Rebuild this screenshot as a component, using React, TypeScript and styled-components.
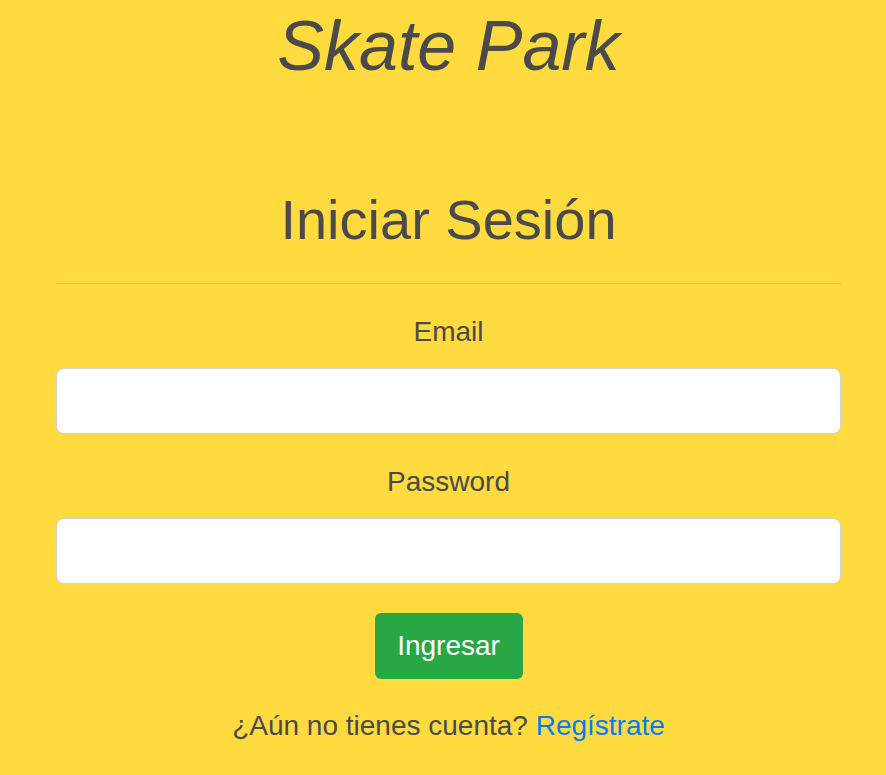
import React from "react";
import styled, { createGlobalStyle } from "styled-components";

const Global = createGlobalStyle`
  html, body { margin: 0; padding: 0; background: #ffdb3f; }
  body { font-family: "Liberation Sans", Arial, sans-serif; color: #4a4a4a; }
  * { box-sizing: border-box; }
`;

const Page = styled.div`
  min-height: 775px;
  background: #ffdb3f;
  padding: 0 45px 0 56px;
  display: flex;
  flex-direction: column;
  align-items: stretch;
`;

const Brand = styled.h1`
  margin: 0;
  font-size: 70px;
  font-style: italic;
  font-weight: 400;
  text-align: center;
  line-height: 1;
  padding-top: 11px;
  color: #4a4a4a;
`;

const Heading = styled.h2`
  margin: 111px 0 0;
  font-size: 56px;
  font-weight: 400;
  text-align: center;
  line-height: 1;
  color: #4a4a4a;
`;

const Rule = styled.hr`
  margin: 35px 0 0;
  border: 0;
  border-top: 1px solid rgba(0, 0, 0, 0.1);
`;

const Form = styled.form`
  display: flex;
  flex-direction: column;
  align-items: stretch;
`;

const Field = styled.div<{ $top: number }>`
  display: flex;
  flex-direction: column;
  align-items: center;
  margin-top: ${(p) => p.$top}px;
`;

const Label = styled.label`
  font-size: 28px;
  line-height: 1;
  color: #4a4a4a;
  margin-bottom: 22px;
`;

const Input = styled.input`
  width: 100%;
  height: 66px;
  border: 1px solid #ced4da;
  border-radius: 8px;
  background: #fff;
  font-size: 24px;
  padding: 0 16px;
  outline: none;
`;

const Button = styled.button`
  align-self: center;
  margin-top: 29px;
  width: 148px;
  height: 66px;
  background: #28a745;
  color: #fff;
  border: 0;
  border-radius: 6px;
  font-family: "Liberation Sans", Arial, sans-serif;
  font-size: 28px;
`;

const Footer = styled.p`
  margin: 30px 0 0;
  text-align: center;
  font-size: 28px;
  line-height: 1.2;
  color: #4a4a4a;
`;

const Link = styled.a`
  color: #007bff;
  text-decoration: none;
`;

export default function App() {
  return (
    <>
      <Global />
      <Page>
        <Brand>Skate Park</Brand>
        <Heading>Iniciar Sesión</Heading>
        <Rule />
        <Form onSubmit={(e) => e.preventDefault()}>
          <Field $top={34}>
            <Label>Email</Label>
            <Input type="email" />
          </Field>
          <Field $top={34}>
            <Label>Password</Label>
            <Input type="password" />
          </Field>
          <Button type="submit">Ingresar</Button>
        </Form>
        <Footer>
          ¿Aún no tienes cuenta? <Link href="#">Regístrate</Link>
        </Footer>
      </Page>
    </>
  );
}
